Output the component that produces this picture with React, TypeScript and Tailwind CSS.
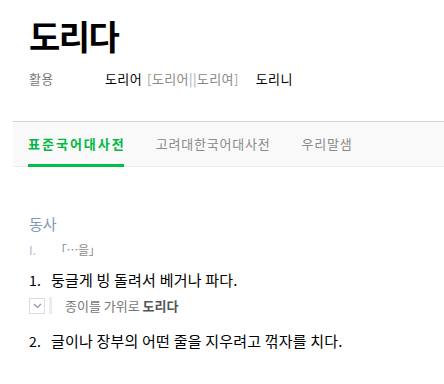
const FONT = "font-['Noto_Sans_CJK_KR','Noto_Sans',sans-serif]";

export default function App() {
	return (
		<div className={`${FONT} w-[444px] h-[384px] bg-white overflow-hidden`}>
			<div className="pl-[29px] pt-[16px]">
				<h1 className="text-[34px] leading-[40px] font-bold tracking-[-1.5px] text-black">
					도리다
				</h1>
				<div className="mt-[14px] flex items-center text-[13px] leading-[18px] tracking-[0.4px]">
					<span className="w-[76px] text-[#777]">활용</span>
					<span className="text-black">도리어</span>
					<span className="ml-[5px] text-[#888]">
						<span className="text-[#b0a080]">[</span>도리어
						<span className="text-[#9ab]">||</span>도리여
						<span className="text-[#b0a080]">]</span>
					</span>
					<span className="ml-[17px] text-black">도리니</span>
				</div>
			</div>

			<div className="mt-[33px] ml-[13px] bg-[#f9f9f9] border-t border-[#d4d4d4] border-b border-b-[#ececec] flex h-[46px]">
				<div className="ml-[15px] relative flex items-center text-[13px] font-bold text-[#00b843] tracking-[2px]">
					표준국어대사전
					<span className="absolute left-0 right-[2px] -bottom-px h-[3px] bg-[#00c04b]" />
				</div>
				<div className="ml-[30px] flex items-center text-[13px] text-[#8a8a8a] tracking-[0.8px]">
					고려대한국어대사전
				</div>
				<div className="ml-[31px] flex items-center text-[13px] text-[#8a8a8a] tracking-[0.8px]">
					우리말샘
				</div>
			</div>

			<div className="pl-[29px] pt-[47px]">
				<div className="text-[15px] leading-[20px] text-[#8597b6]">동사</div>
				<div className="mt-[7px] flex items-center text-[12px] leading-[17px] text-[#8a8a8a]">
					<span className="w-[26px] text-[#b0b8c8]">I.</span>
					<span className="tracking-[-0.5px]">「…을」</span>
				</div>
				<div className="mt-[12px] flex text-[15px] leading-[20px] tracking-[0.2px] text-black">
					<span className="w-[22px] text-[14px]">1.</span>
					<span>둥글게 빙 돌려서 베거나 파다.</span>
				</div>
				<div className="mt-[6px] flex items-center">
					<span className="w-[16px] h-[16px] border border-[#dcdcdc] flex items-center justify-center">
						<svg width="9" height="6" viewBox="0 0 9 6">
							<path d="M1 1l3.5 3.5L8 1" fill="none" stroke="#8b96b0" strokeWidth="1.2" />
						</svg>
					</span>
					<span className="ml-[4px] w-[3px] h-[17px] bg-[#ececec]" />
					<span className="ml-[13px] text-[13px] text-[#777]">
						종이를 가위로 <b className="text-[#555]">도리다</b>
					</span>
				</div>
				<div className="mt-[15px] flex text-[15px] leading-[20px] tracking-[0.2px] text-black">
					<span className="w-[22px] text-[14px]">2.</span>
					<span>글이나 장부의 어떤 줄을 지우려고 꺾자를 치다.</span>
				</div>
			</div>
		</div>
	);
}
